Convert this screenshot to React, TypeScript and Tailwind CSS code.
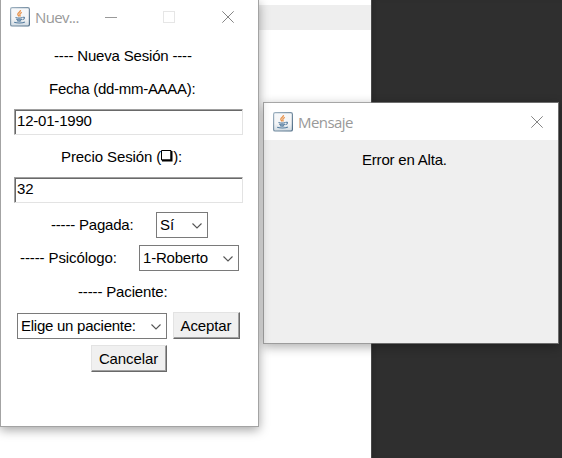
import React from "react";

function JavaIcon() {
  return (
    <svg width="20" height="20" viewBox="0 0 20 20" className="shrink-0">
      <defs>
        <linearGradient id="tile" x1="0" y1="0" x2="0" y2="1">
          <stop offset="0" stopColor="#f6f8fa" />
          <stop offset="0.6" stopColor="#f4f5f6" />
          <stop offset="1" stopColor="#cfdae2" />
        </linearGradient>
        <linearGradient id="edge" x1="0" y1="0" x2="1" y2="1">
          <stop offset="0" stopColor="#9fb2c1" />
          <stop offset="1" stopColor="#4f6d86" />
        </linearGradient>
      </defs>
      <rect x="0.6" y="0.6" width="18.8" height="18.4" rx="1.6" fill="url(#tile)" stroke="url(#edge)" strokeWidth="1.2" />
      <path d="M10.5 3.200c.4 1.700-2.700 2.300-2.700 4 0 1 .9 1.500 1.300 2.200M11.800 5.400c-1.600.7-2.300 1.300-2 2.200.3.700.6 1.100-.1 1.900" fill="none" stroke="#e8924a" strokeWidth="1.300" />
      <path d="M5.500 10.500c2 .7 5.300.6 7 0M6.300 12.200c1.600.6 4.200.6 5.600 0M7 13.700c1.300.5 3.100.5 4.200 0M12.800 10.300c2.200-.6 2.300 1.800-.3 2.400M4.200 15.300c2.500 1.100 8.500 1 10.700-.2" fill="none" stroke="#537b9e" strokeWidth="1.100" />
    </svg>
  );
}

function CloseIcon() {
  return (
    <svg width="12" height="12" viewBox="0 0 12 12" className="shrink-0">
      <path d="M0.300 0.300L11.700 11.700M11.700 0.300L0.300 11.700" stroke="#858585" strokeWidth="1" />
    </svg>
  );
}

function Label({ children, className = "" }: { children: React.ReactNode; className?: string }) {
  return <span className={"block whitespace-nowrap " + className}>{children}</span>;
}

function Field({ value }: { value: string }) {
  return (
    <div className="ml-[13px] h-[26px] w-[229px] border border-t-[#a0a0a0] border-l-[#a0a0a0] border-r-[#e3e3e3] border-b-[#e3e3e3]">
      <div className="h-6 border-t border-l border-[#696969] pl-px leading-[20px] tracking-[-0.2px]">{value}</div>
    </div>
  );
}

function Choice({ value, className, textClass = "" }: { value: string; className: string; textClass?: string }) {
  return (
    <div className={"flex h-[26px] shrink-0 items-center justify-between border border-[#7a7a7a] bg-white pr-[5px] pl-[3px] whitespace-nowrap " + className}>
      <span className={textClass}>{value}</span>
      <svg width="10" height="6" viewBox="0 0 10 6" className="mt-px shrink-0">
        <path d="M0.500 0.500L5 5L9.500 0.500" fill="none" stroke="#555" strokeWidth="1.100" />
      </svg>
    </div>
  );
}

function PushButton({ children, className }: { children: string; className: string }) {
  return (
    <div className={"h-[27px] shrink-0 border border-t-[#e3e3e3] border-l-[#e3e3e3] border-r-[#696969] border-b-[#696969] " + className}>
      <div className="h-[25px] border-r border-b border-[#a0a0a0] bg-[#f0f0f0] text-center leading-[25px] tracking-[-0.1px] whitespace-nowrap">{children}</div>
    </div>
  );
}

export default function App() {
  return (
    <div className="relative flex h-[458px] w-[562px] overflow-hidden bg-white font-['Liberation_Sans',Arial,sans-serif] text-[15px] leading-[18px] text-black">
      <div className="w-[371px] pt-[5px]">
        <div className="h-[25px] bg-[#eeeeee]" />
      </div>
      <div className="flex-1 border-l border-[#484848] bg-[#2f2f2f] shadow-[inset_5px_0_5px_-3px_#292929]" />

      <div className="absolute top-[102px] left-[263px] h-[242px] w-[296px] border border-[#8c8c8c]/70 bg-[#efefef] bg-clip-padding shadow-[0_3px_10px_rgba(0,0,0,0.32)]">
        <div className="flex h-[37px] items-center bg-white pr-[15px] pl-[9px]">
          <JavaIcon />
          <span className="ml-[5px] flex-1 font-['Open_Sans',sans-serif] text-[15px] tracking-[-0.55px] text-[#999]">Mensaje</span>
          <CloseIcon />
        </div>
        <Label className="mt-[11px] pl-[98px] tracking-[-0.2px]">Error en Alta.</Label>
      </div>

      <div className="absolute top-0 left-0 h-[427px] w-[259px] border-r border-b border-l border-[#a3a3a3] bg-white shadow-[0_3px_10px_rgba(0,0,0,0.36)]">
        <div className="flex h-[34px] items-center pr-[24px] pl-[9px]">
          <JavaIcon />
          <span className="ml-[5px] w-[70px] font-['Open_Sans',sans-serif] text-[15px] tracking-[-0.65px] text-[#999]">Nuev...</span>
          <div className="h-px w-[12px] bg-[#999]" />
          <div className="ml-[46px] h-[12px] w-[12px] border border-[#e6e6e6]" />
          <div className="flex flex-1 justify-end"><CloseIcon /></div>
        </div>
        <Label className="mt-[13px] pl-[53px] tracking-[-0.18px]">---- Nueva Sesión ----</Label>
        <Label className="mt-[15px] mb-[11px] pl-[48px] tracking-[-0.28px]">Fecha (dd-mm-AAAA):</Label>
        <Field value="12-01-1990" />
        <div className="mt-[13px] mb-[11px] flex h-[18px] items-center pl-[60px] tracking-[-0.1px]">
          <span>Precio Sesión (</span>
          <svg width="12" height="12" viewBox="0 0 12 12" className="mb-[3px]">
            <path d="M0.500 0.500H10V10H0.500Z" fill="white" stroke="black" strokeWidth="1" />
            <path d="M10.500 1V10.500H1" fill="none" stroke="black" strokeWidth="2" />
          </svg>
          <span>):</span>
        </div>
        <Field value="32" />
        <div className="mt-[9px] flex h-[26px] items-center pl-[50px]">
          <Label className="w-[105px] tracking-[-0.2px]">----- Pagada:</Label>
          <Choice value="Sí" className="w-[52px]" />
        </div>
        <div className="mt-[7px] flex h-[26px] items-center pl-[19px]">
          <Label className="w-[119px] tracking-[-0.1px]">----- Psicólogo:</Label>
          <Choice value="1-Roberto" className="w-[100px]" textClass="tracking-[-0.2px]" />
        </div>
        <Label className="mt-[12px] pl-[77px] tracking-[-0.15px]">----- Paciente:</Label>
        <div className="mt-[11px] flex items-end pl-[16px]">
          <Choice value="Elige un paciente:" className="w-[150px]" textClass="tracking-[-0.25px]" />
          <PushButton className="ml-[6px] w-[67px]">Aceptar</PushButton>
        </div>
        <PushButton className="mt-[6px] ml-[90px] w-[76px]">Cancelar</PushButton>
      </div>
    </div>
  );
}
